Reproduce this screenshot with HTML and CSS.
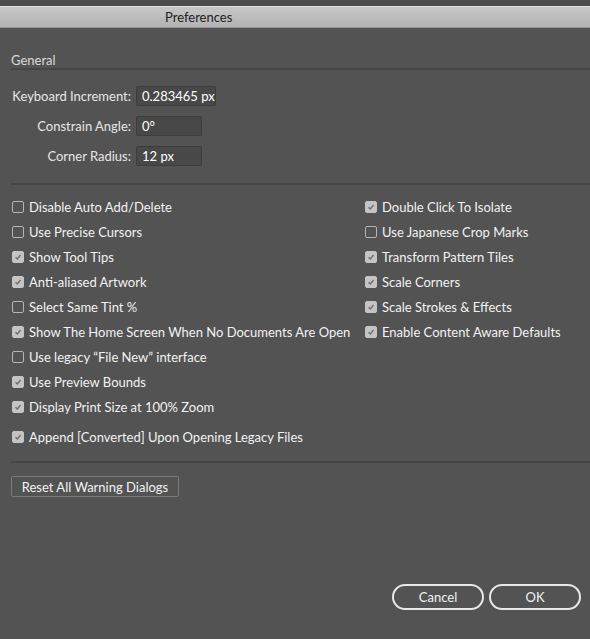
FILE: index.html
```html
<!DOCTYPE html>
<html>
<head>
<meta charset="utf-8">
<link rel="stylesheet" href="styles.css">
</head>
<body>
<div class="top-strip"></div>
<div class="titlebar"><span class="title">Preferences</span></div>
<div class="content">
  <div class="section-title">General</div>
  <div class="sep"></div>
  <div class="fields">
    <div class="field"><label>Keyboard Increment:</label><div class="input wide">0.283465 px</div></div>
    <div class="field"><label>Constrain Angle:</label><div class="input">0°</div></div>
    <div class="field"><label>Corner Radius:</label><div class="input">12 px</div></div>
  </div>
  <div class="sep sep2"></div>
  <div class="checks">
    <div class="col">
      <div class="cb"><span class="box"></span>Disable Auto Add/Delete</div>
      <div class="cb"><span class="box"></span>Use Precise Cursors</div>
      <div class="cb"><span class="box on"><svg viewBox="0 0 12 12"><path d="M3 6.2 L5.2 8.4 L9 3.6"/></svg></span>Show Tool Tips</div>
      <div class="cb"><span class="box on"><svg viewBox="0 0 12 12"><path d="M3 6.2 L5.2 8.4 L9 3.6"/></svg></span>Anti-aliased Artwork</div>
      <div class="cb"><span class="box"></span>Select Same Tint %</div>
      <div class="cb"><span class="box on"><svg viewBox="0 0 12 12"><path d="M3 6.2 L5.2 8.4 L9 3.6"/></svg></span>Show The Home Screen When No Documents Are Open</div>
      <div class="cb"><span class="box"></span>Use legacy “File New” interface</div>
      <div class="cb"><span class="box on"><svg viewBox="0 0 12 12"><path d="M3 6.2 L5.2 8.4 L9 3.6"/></svg></span>Use Preview Bounds</div>
      <div class="cb"><span class="box on"><svg viewBox="0 0 12 12"><path d="M3 6.2 L5.2 8.4 L9 3.6"/></svg></span>Display Print Size at 100% Zoom</div>
    </div>
    <div class="col">
      <div class="cb"><span class="box on"><svg viewBox="0 0 12 12"><path d="M3 6.2 L5.2 8.4 L9 3.6"/></svg></span>Double Click To Isolate</div>
      <div class="cb"><span class="box"></span>Use Japanese Crop Marks</div>
      <div class="cb"><span class="box on"><svg viewBox="0 0 12 12"><path d="M3 6.2 L5.2 8.4 L9 3.6"/></svg></span>Transform Pattern Tiles</div>
      <div class="cb"><span class="box on"><svg viewBox="0 0 12 12"><path d="M3 6.2 L5.2 8.4 L9 3.6"/></svg></span>Scale Corners</div>
      <div class="cb"><span class="box on"><svg viewBox="0 0 12 12"><path d="M3 6.2 L5.2 8.4 L9 3.6"/></svg></span>Scale Strokes &amp; Effects</div>
      <div class="cb"><span class="box on"><svg viewBox="0 0 12 12"><path d="M3 6.2 L5.2 8.4 L9 3.6"/></svg></span>Enable Content Aware Defaults</div>
    </div>
  </div>
  <div class="cb append"><span class="box on"><svg viewBox="0 0 12 12"><path d="M3 6.2 L5.2 8.4 L9 3.6"/></svg></span>Append [Converted] Upon Opening Legacy Files</div>
  <div class="sep sep3"></div>
  <button class="reset">Reset All Warning Dialogs</button>
</div>
<div class="footer">
  <button class="pill">Cancel</button>
  <button class="pill ok">OK</button>
</div>
</body>
</html>
```
FILE: styles.css
```css
html, body {
  margin: 0;
  padding: 0;
}
body {
  width: 590px;
  height: 639px;
  background: #535353;
  font-family: "Lato", "Liberation Sans", sans-serif;
  font-size: 13px;
  color: #f2f2f2;
  overflow: hidden;
}
.top-strip {
  height: 6px;
  background: #4d4d4d;
}
.titlebar {
  box-sizing: border-box;
  border-top: 1px solid #dedede;
  border-bottom: 1px solid #959595;
  background: linear-gradient(#c7c7c7, #b3b3b3);
  height: 22px;
  display: flex;
  align-items: center;
  padding-left: 165px;
}
.title {
  color: #222;
  font-size: 13px;
}
.content {
  padding: 24px 0 0 11px;
}
.section-title {
  color: #d9d9d9;
  line-height: 16px;
}
.sep {
  height: 2px;
  background: #454545;
}
.fields {
  display: flex;
  flex-direction: column;
  gap: 10px;
  padding-top: 16px;
}
.field {
  display: flex;
  align-items: center;
  gap: 5px;
}
.field label {
  width: 120px;
  text-align: right;
  color: #e6e6e6;
}
.input {
  box-sizing: border-box;
  width: 66px;
  height: 20px;
  background: #484848;
  border: 1px solid #3d3d3d;
  border-radius: 2px;
  padding-left: 5px;
  line-height: 18px;
  color: #fff;
}
.input.wide {
  width: 80px;
}
.sep2 {
  margin-top: 17px;
}
.checks {
  display: grid;
  grid-template-columns: 353px auto;
  padding-top: 9px;
  padding-left: 1px;
}
.col {
  display: flex;
  flex-direction: column;
}
.cb {
  display: flex;
  align-items: center;
  height: 25px;
  color: #f2f2f2;
  white-space: nowrap;
}
.box {
  box-sizing: border-box;
  width: 12px;
  height: 12px;
  border: 1px solid #b5b5b5;
  border-radius: 2px;
  margin-right: 5px;
  flex: none;
  display: flex;
}
.box.on {
  background: #c4c4c4;
  border-color: #c4c4c4;
}
.box svg {
  width: 10px;
  height: 10px;
}
.box path {
  fill: none;
  stroke: #6e6e6e;
  stroke-width: 1.6;
}
.append {
  margin-top: 5px;
  padding-left: 1px;
}
.sep3 {
  margin-top: 12px;
}
.reset {
  margin-top: 13px;
  width: 168px;
  height: 21px;
  background: transparent;
  border: 1px solid #7a7a7a;
  border-radius: 2px;
  color: #f2f2f2;
  font-family: inherit;
  font-size: 13px;
  padding: 0;
}
.footer {
  display: flex;
  justify-content: flex-end;
  gap: 5px;
  padding: 87px 9px 0 0;
}
.pill {
  width: 92px;
  height: 26px;
  background: transparent;
  border: 2px solid #e8e8e8;
  border-radius: 13px;
  color: #f2f2f2;
  font-family: inherit;
  font-size: 13px;
  padding: 0;
}
```
